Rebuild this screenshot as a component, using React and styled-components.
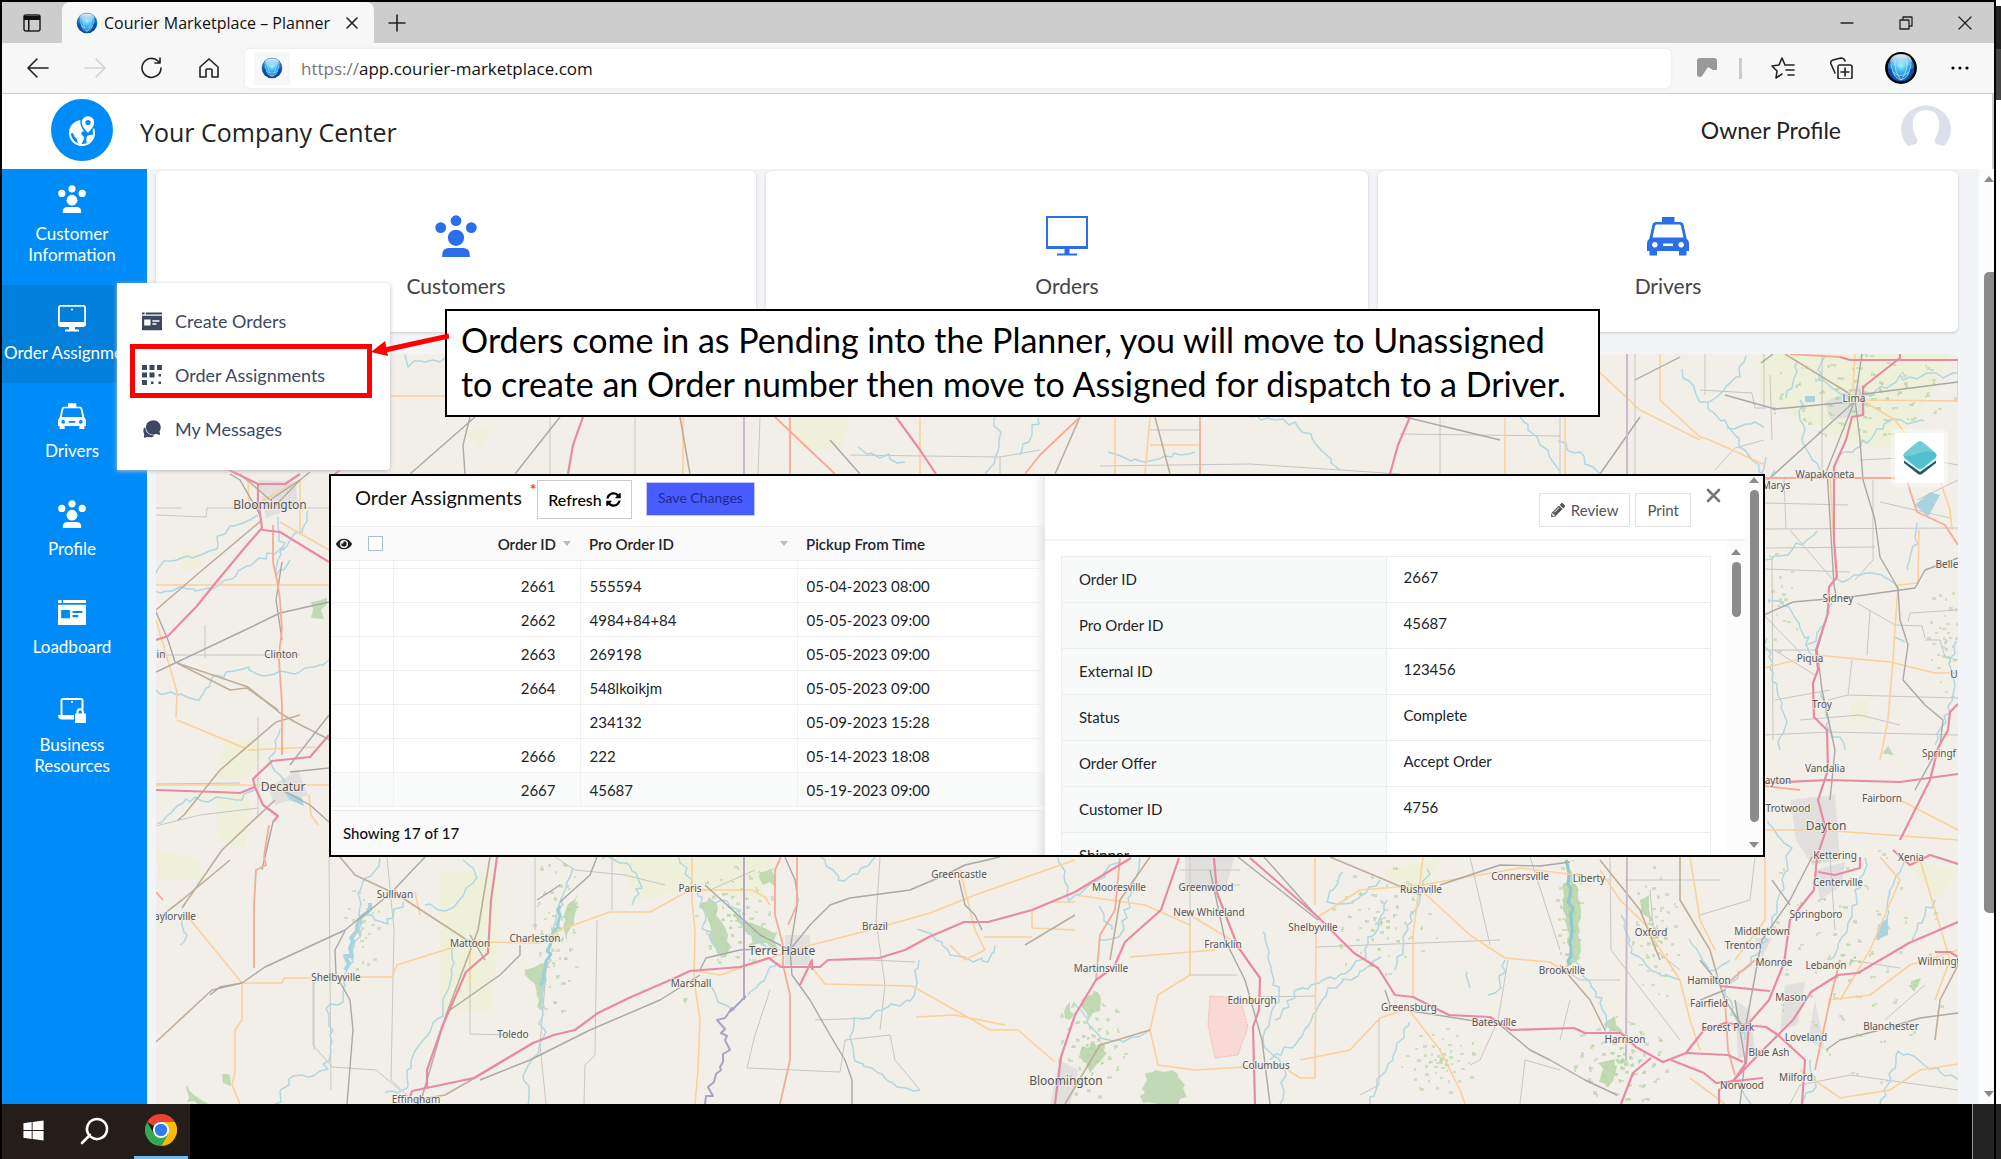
import React from 'react'
import styled, { createGlobalStyle } from 'styled-components';
import { FaEye, FaPencilAlt, FaSyncAlt, FaWindows } from 'react-icons/fa';
import { IoChatbubbles } from 'react-icons/io5';

const GlobalStyle = createGlobalStyle`
	* { box-sizing: border-box; }
	body { margin: 0; background: #fff; font-family: Lato, "Liberation Sans", sans-serif; color: #212529; }
	button, input { font: inherit; color: inherit; }
	button { border: 0; padding: 0; background: none; cursor: pointer; }
	a { color: inherit; text-decoration: none; }
	svg { display: block; flex: none; }
`;

/* ---------- icons ---------- */

const PeopleIcon = ({ size = 28 }) => (
	<svg width={size} height={size} viewBox="0 0 28 28" fill="currentColor">
		<circle cx="14" cy="3.8" r="3.6" />
		<circle cx="3.800" cy="8.4" r="3.6" />
		<circle cx="24.200" cy="8.4" r="3.6" />
		<circle cx="14" cy="15.2" r="5.4" />
		<path d="M4.800 28v-1.400q0-4.600 4.600-4.600h9.200q4.600 0 4.600 4.600V28z" />
	</svg>
);

const MonitorIcon = () => (
	<svg width="28" height="28" viewBox="0 0 28 28" fill="currentColor">
		<path fillRule="evenodd" d="M3 1h22a3 3 0 0 1 3 3v16a3 3 0 0 1-3 3H3a3 3 0 0 1-3-3V4a3 3 0 0 1 3-3zm-1.200 1.800v15.200h24.400V2.800z" />
		<path d="M11 23h6v2.400h4V27.400H7v-2h4z" />
		<circle cx="14" cy="5.600" r="1" />
	</svg>
);

const ScreenIcon = () => (
	<svg width="42" height="42" viewBox="0 0 42 42" fill="currentColor">
		<path fillRule="evenodd" d="M0 1h42v33H0zM2 3v28h38V3z" />
		<path d="M18.500 34h5v4.500H31v2H11v-2h7.500z" />
	</svg>
);

const TaxiIcon = ({ size = 28 }) => (
	<svg width={size} height={size} viewBox="0 0 42 42" fill="currentColor">
		<path fillRule="evenodd" d="M15 2h12.500v5H33q3 0 3.600 3l3 13.500q2.400 2 2.400 5V36h-2.500v4.500h-7.500V36H10v4.500H2.500V36H0v-7.500q0-3 2.400-5l3-13.500Q6 7 9 7h6zM9.500 9.500Q8.200 9.500 8 11L5.500 22.500h31L34 11q-.3-1.500-1.500-1.500zM7.800 27a2.800 2.800 0 1 0 .1 0zm26.300 0a2.800 2.800 0 1 0 .1 0zM16 28.500v2.600h10v-2.600z" />
	</svg>
);

const BoardIcon = ({ size = 27 }) => (
	<svg width={size} height={size} viewBox="0 0 27 27" fill="currentColor">
		<path d="M0 2h3.500v2.800H0zM5 2h22v2.800H5z" />
		<path fillRule="evenodd" d="M0 6.500h27V26H0zm3 5v8h8.500v-8zm11 1v2h9.500v-2zm0 4v2h5.500v-2z" />
	</svg>
);

const LaptopLockIcon = () => (
	<svg width="28" height="28" viewBox="0 0 28 28" fill="currentColor">
		<path fillRule="evenodd" d="M2.500 19V4.500q0-2.500 2.500-2.500h18q2.500 0 2.500 2.500V13h-2V4H4.500v15z" />
		<path d="M0 19h16v4.500H4Q0 23.500 0 19z" />
		<circle cx="14" cy="6" r="1" />
		<path fillRule="evenodd" d="M17 17.500h1.500V16a3.700 3.700 0 0 1 7.400 0v1.500H28V27H17zm3.500 0h3.400V16a1.700 1.700 0 0 0-3.400 0z" />
	</svg>
);

const BlocksIcon = () => (
	<svg width="20" height="20" viewBox="0 0 20 20" fill="currentColor">
		<path d="M0 0h5v5H0zM7.500 0h5v5h-5zM15 0h5v5h-5zM0 7.500h5v5H0zM7.500 7.500h5v5h-5zM0 15h5v5H0z" />
		<path d="M16.500 9h2.500v2.500h-2.500zM9 16.500h2.500V19H9zM16.500 16.500h2.500V19h-2.500z" />
	</svg>
);

const GlobeLogo = ({ size, ring }) => (
	<svg width={size} height={size} viewBox="0 0 32 32">
		<defs>
			<radialGradient id="ball" cx="50%" cy="42%" r="58%">
				<stop offset="0" stopColor="#8ff0ff" />
				<stop offset=".45" stopColor="#2fa9e6" />
				<stop offset="1" stopColor="#0a3f9c" />
			</radialGradient>
			<linearGradient id="shine" x1="0" y1="0" x2="0" y2="1">
				<stop offset="0" stopColor="#fff" stopOpacity=".9" />
				<stop offset="1" stopColor="#fff" stopOpacity="0" />
			</linearGradient>
		</defs>
		<circle cx="16" cy="16" r={ring ? 14.600 : 15} fill="url(#ball)" stroke={ring ? '#000' : 'none'} strokeWidth="2.600" />
		<path d="M3 16q-1 9 9 14-5-6-5-13zM29 16q1 9-9 14 5-6 5-13z" fill="#0b3d9a" opacity=".7" />
		<path d="M6 12Q8 26 16 28Q24 26 26 12M8 20q8 7 16 0M10 8q-1 12 6 20q7-8 6-20" fill="none" stroke="#bdeaff" strokeWidth="1" opacity=".7" />
		<ellipse cx="16" cy="9" rx="11" ry="7" fill="url(#shine)" />
	</svg>
);

const CompanyLogo = () => (
	<svg width="62" height="62" viewBox="0 0 62 62">
		<circle cx="31" cy="31" r="31" fill="#008cf8" />
		<circle cx="31" cy="34" r="12" fill="none" stroke="#fff" strokeWidth="2" />
		<path fill="#fff" d="M21 27q4-6 11-5q-3 5 1 10q-4 1-2 4q4 2 1 6l-2 4q-4-1-4-6q-3-2-4-6q-2 1-3-1z" />
		<path fill="#fff" d="M36 37q3-2 7-1q-1 6-6 9q-3-3-1-8z" />
		<path fill="#fff" stroke="#008cf8" strokeWidth="1.500" d="M37 35q-7-7-7-11.500a7 7 0 0 1 14 0q0 4.500-7 11.500z" />
		<circle cx="37" cy="23.500" r="2.600" fill="#008cf8" />
	</svg>
);

const LineIcon = ({ d, w = 22, h = 22, color = '#222', stroke = 1.600 }) => (
	<svg width={w} height={h} viewBox={`0 0 ${w} ${h}`} fill="none" stroke={color} strokeWidth={stroke} strokeLinecap="round" strokeLinejoin="round">
		<path d={d} />
	</svg>
);

const ChromeIcon = () => (
	<svg width="32" height="32" viewBox="0 0 32 32">
		<path fill="#ea4335" d="M16 16 2.140 8A16 16 0 0 1 29.860 8z" />
		<path fill="#fbbc05" d="M16 16V8h13.860A16 16 0 0 1 16 32l6.900-12z" />
		<path fill="#34a853" d="M2.140 8 9.100 20 16 23l6.900-3L16 32A16 16 0 0 1 2.140 8z" />
		<circle cx="16" cy="16" r="8" fill="#fff" />
		<circle cx="16" cy="16" r="6.200" fill="#2e7cf0" />
	</svg>
);

const LayersIcon = () => (
	<svg width="34" height="36" viewBox="0 0 34 36">
		<path fill="#1d5a6b" d="M1 20l16 11 16-11v3L19 34q-2 1.500-4 0L1 23z" />
		<path fill="#e8f7f8" d="M1 17l16 11 16-11v3.500L17 32 1 20.500z" />
		<path fill="#4fc0cc" d="M14 2.500q3-2 6 0L32.500 13q2 2.500 0 5L20 28q-3 2-6 0L1.500 18q-2-2.500 0-5z" />
		<path fill="#72cdd7" d="M14 2.500q3-2 6 0L32.500 13q-9-3-17 .5-7 3-14.800 2.500 0-2 .8-3z" />
	</svg>
);

/* ---------- map ---------- */

// breaks every long segment into short bends, for rivers and creeks
const meander = (line, amp = 4) => {
	const pts = line.split(' ').map(p => p.split(',').map(Number));
	let seed = pts[0][0] * 7 + pts[0][1];
	const rand = () => {
		seed = (seed * 9301 + 49297) % 233280;
		return seed / 233280 - 0.5;
	};
	const out = [];
	pts.slice(1).forEach(([x, y], i) => {
		const [px, py] = pts[i];
		const n = Math.max(1, Math.round(Math.hypot(x - px, y - py) / 6));
		for (let k = 0; k < n; k++) {
			out.push([px + (x - px) * k / n + rand() * amp, py + (y - py) * k / n + rand() * amp]);
		}
	});
	out.push(pts[pts.length - 1]);
	return out.map(p => p.map(Math.round).join(',')).join(' ');
};

const motorways = [
	'156,640 168,636 197,606 213,586 247,545 262,528 258,500 258,484 225,468',
	'262,530 280,532 329,562', '156,790 217,792 240,793 255,787 253,779 272,761 310,757 329,735',
	'255,787 263,805 278,816 273,822', '258,484 285,484 300,474', '340,470 330,478',
	'497,857 491,900 488,953 466,972 442,1027 427,1070 427,1087',
	'410,1097 412,1091 474,1078 533,1043 554,1035 575,1030 598,1013 631,997 675,978 690,971 740,967 769,958 781,967 820,967 828,960 879,958 905,950 929,937 964,922 988,922 1032,910 1075,892 1131,858',
	'1214,858 1217,893 1238,947 1260,978 1259,1010 1253,1027 1255,1104',
	'1250,858 1318,917 1354,953 1378,968 1395,995 1413,997 1449,1015 1490,1017 1511,1030 1574,1028 1585,1033 1621,1033 1636,1047 1663,1062 1686,1053 1728,1055 1743,1062',
	'1671,1060 1704,1073 1716,1083 1763,1078', '1651,1058 1633,1073 1621,1104',
	'1686,1053 1704,1030 1725,1023 1766,1027 1778,1035 1805,1060 1802,1104',
	'1900,354 1900,358 1863,387 1863,415 1852,417 1846,440 1834,467 1834,540 1837,577 1829,587 1828,613 1816,650 1818,670 1813,683 1814,717 1827,730 1828,770 1818,800 1826,830 1817,857 1814,890 1790,920 1784,963 1769,1000 1749,1023 1746,1063 1734,1080 1719,1090 1719,1104',
	'1958,922 1909,943 1858,973 1838,975 1811,992 1793,1020 1763,1050 1734,1080',
	'1840,357 1850,360 1958,360', '1764,783 1828,780 1900,782 1958,774',
	'1179,858 1161,910 1125,942 1114,967 1096,980 1075,1015 1061,1057 1055,1104',
	'583,417 573,445 568,474', '896,417 920,450 936,474', '1410,417 1398,445 1390,474',
	'1860,857 1860,868 1835,875 1818,872', '1893,850 1910,865 1930,855 1958,864', '1720,986 1770,991',
	'812,970 812,960 800,985', '1935,952 1950,952 1958,957', '1958,704 1950,712 1948,730 1938,748 1930,780 1900,840',
];

const trunks = [
	'273,525 273,562 278,585 280,600 282,630 280,645 279,660 282,705 282,755', '269,825 265,850 264,858 266,865 256,870 254,905 254,968',
	'156,892 163,900', '781,857 775,870 775,915 783,945 783,965 790,995 790,1060 780,1104', '797,857 797,905 788,925',
	'790,417 790,474', '775,417 835,474', '1080,417 1040,455 1025,474', '1200,417 1200,474', '1905,475 1917,512 1945,525 1958,545',
	'1765,478 1895,478', '1790,354 1840,357', '1120,858 1115,910 1100,935 1096,980', '1764,786 1800,790',
	'1725,1000 1728,1050 1735,1075', '1840,960 1830,1000 1815,1070', '1755,960 1725,985',
];

const primaries = [
	'156,585 329,585', '156,620 177,692 176,718', '248,480 249,508 300,480', '300,480 300,535', '280,522 329,550',
	'156,785 329,785', '248,750 315,747', '309,795 311,815 318,825', '177,720 247,749', '184,912 242,983 282,983 284,978 312,978 312,977 392,977 397,965 470,942 540,943 560,930 610,912 650,912 690,890 752,890 765,897 770,905',
	'242,983 242,1020 235,1030 235,1072 232,1085 240,1104', '415,892 420,915', '470,950 470,985',
	'692,857 692,900 695,930 694,980 700,1020 698,1070 695,1104', '690,970 720,975 800,948 870,930 930,913 975,895 1075,860',
	'810,965 825,984 912,986 955,1010 990,1030 1018,1030 1055,1062', '916,1017 955,1015 1005,1025', '960,870 975,930 985,950 965,960 950,945',
	'1032,910 1032,928 1075,930', '1052,902 1075,902', '984,937 1032,937', '1075,895 1145,905 1190,925 1190,975 1158,995 1150,1030 1158,1065 1195,1070 1280,1065 1300,1078 1315,1078 1316,930',
	'1130,957 1215,950', '1190,915 1235,942', '1318,917 1360,890 1421,885 1520,868 1560,873 1610,880', '1421,890 1470,935 1505,958 1550,962 1562,970',
	'1413,997 1413,935 1423,857', '1409,1010 1440,1050 1460,1090 1465,1104', '1409,1008 1380,1018 1350,1050 1300,1060',
	'1315,858 1315,905', '1651,930 1620,900 1600,870', '1651,935 1680,980 1690,1020 1700,1050', '1765,465 1710,440 1700,437',
	'1855,354 1853,390 1865,400 1958,401', '1865,402 1895,420 1910,440', '1830,475 1836,580', '1940,480 1950,510 1952,530',
	'1898,585 1918,583 1919,530', '1898,585 1893,660 1888,720 1880,760', '1764,668 1816,655 1890,662 1935,673 1958,673',
	'1764,830 1820,830 1890,835 1958,840', '1900,800 1958,830', '1920,860 1935,910 1950,960 1935,1000', '1880,857 1900,880 1870,950 1840,1000',
	'1828,1000 1870,995 1910,965 1958,950', '1800,1070 1840,1098 1890,1090 1920,1070 1958,1064', '1690,1078 1725,1104', '1690,857 1700,920 1715,950',
	'1565,417 1565,474', '1505,417 1505,474', '1115,417 1115,474', '1660,354 1660,400 1700,437', '683,417 683,474', '390,396 450,396',
	'1150,417 1145,474', '1580,354 1640,410 1700,440', '920,417 920,474', '1200,445 1150,445', '1765,857 1765,920 1735,960',
	'1958,354 1958,400', '1850,600 1851,598',
];

const railways = [
	'156,672 245,630 280,613 329,602', '282,562 276,600 282,640', '156,612 168,640 175,662', '290,765 329,715', '290,772 329,768',
	'282,790 310,805 329,822', '273,822 262,870', '242,983 265,967 345,930 390,894 425,857', '345,931 335,950 336,975 350,1000 353,1030 347,1104',
	'242,983 220,987 210,995', '485,960 470,935', '520,945 520,955 500,975 450,1010', '560,902 590,875 597,857', '537,900 560,885',
	'705,885 760,935 790,950', '785,857 795,880 798,900 790,950', '790,950 810,925 830,905 850,898 910,890 945,875 965,865 1000,857',
	'959,880 965,905 975,915 982,930', '790,950 792,975 810,1000 830,1035 845,1060 852,1080 852,1104', '700,970 706,958 740,950 775,948',
	'700,975 660,1000 590,1030 530,1060 480,1080', '1238,857 1318,920', '1210,870 1225,940 1245,980 1262,1040 1270,1104',
	'1385,990 1390,1005 1405,1010 1500,1025 1530,1050 1550,1060 1585,1080 1617,1095', '1440,885 1500,865 1540,866 1570,862',
	'1700,960 1720,985 1725,1000 1745,1030 1758,960 1762,940 1790,900 1812,857', '1772,880 1790,905', '1764,615 1793,602 1850,597 1915,588 1925,570 1958,558',
	'1725,395 1775,409 1850,402', '1862,354 1855,400 1860,440 1863,480 1875,520 1880,557 1898,588 1900,620 1908,645 1903,680 1925,705 1943,720 1940,745 1915,790',
	'1854,402 1770,478', '1855,400 1827,470 1834,585 1837,600', '1864,394 1958,382', '1761,363 1773,354', '1828,613 1817,650 1822,690 1835,750 1830,800',
	'475,417 410,474', '560,417 515,474', '1405,417 1500,440', '1640,417 1600,474', '830,440 860,474', '1740,1104 1745,1060 1735,1000',
	'1958,1013 1920,1018 1880,1030 1840,1040 1826,1050', '470,417 463,445 465,474', '1680,357 1635,380', '260,515 240,480 230,474', '270,500 300,480 310,472',
	'1264,857 1320,920', '1700,1000 1725,990',
];

const county = [
	'156,515 206,517 207,508 329,508', '205,625 205,658', '156,655 300,655', '258,717 258,815', '156,784 240,783', '156,826 200,815 258,808',
	'156,508 182,508', '314,980 314,1050', '329,857 331,1090', '387,857 394,930 391,1080 410,1098', '313,980 313,1045 332,1067 376,1070 400,1090', '470,985 470,1034 510,1035',
	'547,960 540,1045 546,1104', '535,857 535,930', '597,920 595,1055 585,1065 584,1104', '612,857 612,910', '555,857 575,870 625,875 665,885',
	'755,870 710,890 700,890', '880,857 876,920 885,985 880,1030', '770,990 755,1035 747,1068 840,1072 845,1040 890,1035 895,1060 920,1090', '815,1020 870,1018',
	'835,960 870,960 915,962', '1190,975 1237,975', '1316,947 1500,940', '1260,997 1316,996', '1470,857 1490,945', '1508,960 1498,1020 1480,1060 1470,1065',
	'1379,1020 1379,1085 1360,1095', '1530,857 1560,950', '1565,970 1580,980 1620,980', '1570,1000 1560,1040', '1610,857 1611,950 1680,1040',
	'1625,880 1720,880', '1650,890 1655,950 1680,970', '1700,390 1752,393 1755,408 1766,408', '1822,354 1822,470', '1764,503 1848,505', '1764,529 1958,528',
	'1766,548 1875,547', '1784,478 1786,529', '1790,530 1833,580', '1873,480 1873,560 1855,580', '1764,569 1850,572', '1764,650 1815,650', '1870,610 1867,655',
	'1764,440 1735,448 1715,470', '1772,556 1773,740', '1764,615 1812,665', '1857,603 1895,625 1922,626 1925,638', '1764,735 1830,732 1958,735',
	'1852,660 1848,695 1828,700', '1848,695 1958,698', '1900,455 1958,465', '1917,500 1958,480', '1860,460 1900,458', '1880,502 1950,518',
	'1908,622 1910,613 1958,610', '1925,640 1940,640 1945,657 1958,660', '1774,650 1815,675', '1775,700 1830,690', '1800,720 1860,715 1900,725',
	'1560,410 1560,474', '1440,417 1440,474', '635,417 635,474', '760,417 758,474', '1705,354 1705,395', '1635,354 1635,474', '1770,375 1772,440',
	'1755,857 1750,900 1700,915', '1200,430 1150,430', '850,455 1000,457 1040,450', '1000,457 1000,474', '1100,466 1250,464 1400,474', '1400,434 1560,436',
	'1764,354 1764,408', '550,417 550,474', '1180,870 1240,870', '1178,885 1240,885', '1190,857 1190,925', '1790,1104 1800,1085 1850,1075 1958,1090',
	'1830,857 1835,930', '1850,960 1900,968', '1885,1020 1925,985', '1520,1104 1525,1060 1560,1070',
];

const oldRoads = [
	'240,474 276,505 300,480', '156,610 200,572 262,520', '177,663 230,690 247,688 278,710', '276,722 220,770 184,815 178,820',
	'276,722 300,715', '156,920 182,900 230,860', '177,663 248,687 280,713 295,722 330,740', '275,800 222,850 182,908', '156,1042 212,990 242,983',
	'340,857 355,875 398,895 470,942', '490,857 478,930 446,1015 420,1104', '1330,857 1421,895', '1600,860 1640,910 1660,960', '1680,857 1680,900 1710,950 1720,985',
	'1080,417 1055,474', '1155,417 1170,474', '1785,354 1850,394', '1958,965 1940,1000 1935,1040', '1150,857 1120,900 1110,960', '1560,965 1590,1000 1605,1030', '415,1100 445,1095 480,1075 535,1042',
	'680,417 690,474', '1025,945 1075,915', '1065,1104 1100,1045 1150,1030',
];

const rivers = [
	'156,572 165,562 200,555 215,548 216,538 232,528 258,515', '156,592 185,588 215,590 240,570 258,560 285,548 300,530 308,510',
	'156,690 200,700 210,680 240,668 270,675 300,670 329,660', '280,730 272,760 285,790', '156,825 185,800 235,800 258,790', '278,520 283,545 275,575 290,560', '184,920 187,935 180,945',
	'380,860 360,890 362,930 350,960 340,1000 325,1010 333,1030 325,1070 290,1080 275,1104', '405,900 385,925 365,915', '465,857 475,875 465,895 450,910 425,905',
	'570,870 555,920 550,950 545,985 540,1010 545,1040 525,1070 528,1104', '455,950 452,980 438,1020 415,1050 405,1090 385,1092', '600,857 630,865 640,885 632,905',
	'680,857 690,880 700,900 705,930 720,950', '710,900 730,900 745,930 770,950', '775,960 760,985 748,995', '705,975 720,1000 735,1010', '820,857 840,880 860,875 875,857',
	'920,930 940,940 950,955 975,960 990,960 995,945', '920,960 910,1000 880,1010 855,1020 850,1050 870,1070 900,1085 920,1090', '1060,857 1070,900 1120,860', '1140,857 1130,900 1120,935 1100,940',
	'1075,1000 1095,1035 1120,1042 1150,1030', '1260,930 1270,960 1280,1000 1262,1040 1285,1070 1280,1104', '1340,870 1330,900 1350,905 1380,880', '1390,900 1360,960 1340,975 1300,990 1275,1020',
	'1380,960 1330,990 1300,1040 1270,1060', '1410,1020 1390,1060 1370,1104', '1430,870 1410,920 1395,970', '1505,960 1500,990 1488,995', '1575,960 1600,1000 1608,1035', '1465,970 1470,988',
	'1622,915 1630,950 1650,970 1680,980', '1690,940 1710,970 1730,960', '1748,354 1735,380 1708,402', '1796,360 1795,380 1786,398', '1822,358 1820,380 1850,400',
	'1958,374 1900,378 1870,395 1853,390', '1925,423 1890,420 1870,440 1840,455', '1800,398 1803,430 1806,450 1820,470', '1764,424 1727,428', '1764,460 1762,480 1775,470',
	'1817,533 1780,555 1764,560', '1838,580 1862,575 1880,573 1898,590', '1768,598 1790,610 1808,640 1812,655', '1832,600 1825,620 1815,640 1805,645', '1920,525 1912,560 1908,570',
	'1766,640 1775,680 1785,720 1780,750', '1820,690 1830,730 1845,750', '1958,640 1950,665 1956,690 1945,715 1935,745', '1895,635 1905,642', '1866,860 1850,920 1830,960', '1905,857 1885,900 1890,930',
	'1766,820 1790,850 1780,900 1760,950 1725,990 1745,1040', '860,450 880,455 905,462', '1110,455 1140,460 1195,452', '995,417 1000,445 985,474', '1040,417 1020,455', '1250,415 1300,425 1340,470', '1560,440 1600,474',
	'1680,370 1710,410 1730,430 1764,474', '403,354 410,364 445,358', '1958,1080 1900,1050 1880,1104', '1910,940 1935,900', '1100,905 1112,930', '1560,470 1530,430 1520,417', '1800,1104 1815,1085 1810,1060', '1750,1104 1740,1080',
];

const greens = [
	'1568,862 1580,905 1578,960 1568,965 1566,930 1562,900', '566,910 575,895 578,910 565,940', '525,970 545,960 548,985 540,1012 535,990', '700,900 712,900 730,945 722,960 712,940',
	'735,915 775,935 778,950 755,942', '760,870 775,868 775,885 762,883', '1145,1075 1175,1067 1187,1095 1178,1104 1142,1104', '1080,1050 1100,1042 1108,1055 1092,1070', '1082,1000 1096,990 1100,1010 1090,1020',
	'222,1074 230,1072 229,1088 223,1086', '187,1085 205,1104 190,1104', '1604,1025 1618,1015 1620,1035', '1600,1065 1615,1062 1612,1085 1602,1080', '1640,900 1650,895 1653,920 1648,925',
	'683,1000 688,996 686,1008', '1908,985 1918,978 1915,995', '312,605 325,598 322,618 314,616', '1064,1010 1072,1003 1072,1022', '1880,752 1890,745 1893,757',
];

const farmland = [
	'440,872 497,872 497,950 492,1010 440,1010', '612,857 775,857 760,900 690,890 640,900', '1760,354 1950,354 1915,420 1890,450 1845,440 1760,400', '182,552 200,552 200,570 182,570', '225,740 270,740 245,780 218,780',
	'215,780 250,800 245,850 218,840', '790,417 850,417 840,450 800,450', '1850,704 1868,700 1868,720 1852,722', '460,430 490,430 480,450', '156,850 200,860 206,880 160,880', '1380,870 1440,860 1420,900', '1900,857 1958,870 1940,900',
];

const urban = [
	'258,480 295,482 298,505 266,518', '268,788 298,770 308,795 275,805', '1825,402 1860,385 1866,415 1830,420', '1790,800 1835,795 1840,860 1812,865 1796,840', '1185,857 1235,857 1225,890 1185,890', '1735,1000 1750,1010 1755,1050 1738,1060',
	'1785,985 1805,982 1798,1025 1780,1030', '1755,938 1772,938 1762,958', '785,935 810,935 810,965 785,965', '1060,1060 1078,1070 1070,1104 1050,1104', '1815,1000 1825,1050 1808,1040', '1815,870 1845,862 1842,885 1820,900',
];

const towns = [
	['Bloomington', 270, 509, 1], ['Clinton', 281, 658], ['in', 161, 658], ['Decatur', 283, 791, 1], ['aylorville', 175, 920], ['Sullivan', 395, 898], ['Mattoon', 470, 947],
	['Charleston', 535, 942], ['Paris', 690, 892], ['Terre Haute', 782, 955, 1], ['Marshall', 691, 987], ['Shelbyville', 336, 981], ['Toledo', 513, 1038], ['Effingham', 416, 1103],
	['Brazil', 875, 930], ['Greencastle', 959, 878], ['Bloomington', 1066, 1085, 1], ['Mooresville', 1119, 891], ['Greenwood', 1206, 891], ['New Whiteland', 1209, 916],
	['Franklin', 1223, 948], ['Martinsville', 1101, 972], ['Edinburgh', 1252, 1004], ['Columbus', 1266, 1069], ['Shelbyville', 1313, 931], ['Greensburg', 1409, 1011],
	['Batesville', 1494, 1026], ['Brookville', 1562, 974], ['Rushville', 1421, 893], ['Connersville', 1520, 880], ['Liberty', 1589, 882], ['Oxford', 1651, 936],
	['Harrison', 1625, 1043], ['Hamilton', 1709, 984], ['Trenton', 1743, 949], ['Middletown', 1762, 935], ['Springboro', 1816, 918], ['Monroe', 1774, 966],
	['Lebanon', 1826, 969], ['Mason', 1791, 1001], ['Fairfield', 1709, 1007], ['Forest Park', 1728, 1031], ['Loveland', 1806, 1041], ['Blue Ash', 1769, 1056],
	['Milford', 1796, 1081], ['Norwood', 1742, 1089], ['Blanchester', 1891, 1030], ['Wilmingt', 1939, 965], ['Centerville', 1838, 886], ['Kettering', 1835, 859],
	['Xenia', 1911, 861], ['Lima', 1854, 402], ['Wapakoneta', 1825, 478], ['Marys', 1776, 489], ['Sidney', 1838, 602], ['Belle', 1947, 568], ['Piqua', 1810, 662],
	['Troy', 1822, 708], ['U', 1954, 678], ['Vandalia', 1825, 772], ['Fairborn', 1882, 802], ['ayton', 1778, 784], ['Trotwood', 1788, 812], ['Dayton', 1826, 830, 1], ['Springf', 1939, 757],
];

const Lines = ({ data, ...rest }) => data.map((p, i) => <polyline key={i} points={p} {...rest} />);
const Areas = ({ data, ...rest }) => data.map((p, i) => <polygon key={i} points={p} {...rest} />);

// small woods scattered round a few centres: [x, y, spread x, spread y, count]
const woods = [
	[1860, 395, 95, 45, 160], [1090, 1045, 35, 60, 110], [1620, 1060, 50, 45, 150], [1655, 935, 25, 70, 70], [735, 915, 45, 50, 90], [555, 930, 25, 90, 90],
	[1440, 1060, 40, 35, 60], [1380, 920, 60, 60, 80], [1850, 960, 100, 130, 120], [1945, 640, 20, 60, 40], [1780, 600, 20, 60, 20], [1568, 910, 14, 55, 60], [360, 930, 20, 50, 30],
].flatMap(([cx, cy, rx, ry, count], w) => Array.from({ length: count }, (_, i) => {
	const angle = i * 2.4 + w;
	const far = ((i * 617 + w * 31) % 101) / 101;
	return [Math.round(cx + Math.cos(angle) * rx * far), Math.round(cy + Math.sin(angle) * ry * far)];
}));

const RoadMap = () => (
	<MapSvg viewBox="156 354 1802 750" preserveAspectRatio="xMidYMid slice" role="img" aria-label="Map of order locations">
		<rect x="156" y="354" width="1802" height="750" fill="#f2efe9" />
		<Areas data={farmland} fill="#eef0d5" opacity=".8" />
		<Areas data={urban} fill="#dadada" opacity=".7" />
		<Areas data={greens.map(g => meander(g + ' ' + g.split(' ')[0], 6))} fill="#add19e" opacity=".7" />
		{woods.map(([x, y], i) => <rect key={i} x={x} y={y} width={2 + i % 3} height={2 + i % 2} fill="#b5d6a4" opacity=".6" />)}
		<polygon points="1210,996 1240,998 1248,1027 1238,1055 1215,1058 1208,1025" fill="#f9d9d3" stroke="#f4bcb6" strokeDasharray="2 1" />
		<polygon points="1915,505 1930,492 1940,495 1928,517" fill="#aad3df" />
		<polygon points="1805,396 1815,396 1815,402 1805,402" fill="#aad3df" />
		<polygon points="1878,925 1888,918 1888,935 1876,940" fill="#aad3df" />
		<polygon points="283,790 302,798 304,806 290,800" fill="#aad3df" />
		<g fill="none" strokeLinejoin="round">
			<Lines data={county} stroke="#c6c6c6" strokeWidth="1" />
			<Lines data={rivers.map(r => meander(r, 6))} stroke="#b0d7e3" strokeWidth="1.500" />
			<polyline points={meander('1568,860 1572,920 1570,965', 5)} stroke="#8fc9cf" strokeWidth="3" />
			<polyline points={meander('562,905 550,950 540,985', 6)} stroke="#9ccfd8" strokeWidth="3" />
			<polyline points={meander('370,905 355,930 345,970', 6)} stroke="#aad3df" strokeWidth="4" />
			<Lines data={primaries} stroke="#fbd19b" strokeWidth="1.600" />
			<Lines data={oldRoads} stroke="#bfae97" strokeWidth="1.600" />
			<Lines data={railways} stroke="#a8a8a8" strokeWidth="1.400" />
			<polyline points="744,857 744,1000" stroke="#b9a8c4" strokeWidth="2" />
			<polyline points={meander('744,1000 720,1020 728,1050 705,1104', 8)} stroke="#aba3c6" strokeWidth="2" />
			<polyline points="1627,354 1627,474" stroke="#cdb9cd" strokeWidth="2" />
			<polyline points="1627,857 1626,1060" stroke="#cdb9cd" strokeWidth="2" />
			<polyline points="744,417 744,474" stroke="#cdb9cd" strokeWidth="2" />
			<Lines data={trunks} stroke="#f7ab94" strokeWidth="1.800" />
			<Lines data={motorways} stroke="#e88aa2" strokeWidth="2.200" />
		</g>
		<TownLabels>
			{towns.map(([name, x, y, big], i) => <text key={i} x={x} y={y} fontSize={big ? 12 : 10}>{name}</text>)}
		</TownLabels>
	</MapSvg>
);

/* ---------- data ---------- */

const cards = [
	{ label: 'Customers', icon: <PeopleIcon size={42} /> },
	{ label: 'Orders', icon: <ScreenIcon /> },
	{ label: 'Drivers', icon: <TaxiIcon size={42} /> },
];

const orders = [
	['2661', '555594', '05-04-2023 08:00'],
	['2662', '4984+84+84', '05-05-2023 09:00'],
	['2663', '269198', '05-05-2023 09:00'],
	['2664', '548lkoikjm', '05-05-2023 09:00'],
	['', '234132', '05-09-2023 15:28'],
	['2666', '222', '05-14-2023 18:08'],
	['2667', '45687', '05-19-2023 09:00'],
];

const details = [
	['Order ID', '2667'],
	['Pro Order ID', '45687'],
	['External ID', '123456'],
	['Status', 'Complete'],
	['Order Offer', 'Accept Order'],
	['Customer ID', '4756'],
	['Shipper', ''],
];

export default function App() {
	return (
		<>
			<GlobalStyle />
			<Desktop>
				<Window>
					<BrowserChrome />
					<AppHeader />
					<Main>
						<Sidebar />
						<Content>
							<Cards>
								{cards.map(card => <Card key={card.label} href="#">{card.icon}{card.label}</Card>)}
							</Cards>
							<MapBox>
								<RoadMap />
								<LayerButton aria-label="Map layers"><LayersIcon /></LayerButton>
							</MapBox>
						</Content>
						<PageScroll>
							<Arrow />
							<PageThumb />
							<Arrow down />
						</PageScroll>
						<OrderPanel />
						<Callout>
							<Pointer width="78" height="36" viewBox="0 0 78 36">
								<path d="M78 8 14 22" stroke="#f00" strokeWidth="5" />
								<path d="M0 24 14 13 17 28z" fill="#f00" />
							</Pointer>
							Orders come in as Pending into the Planner, you will move to Unassigned<br />
							to create an Order number then move to Assigned for dispatch to a Driver.
						</Callout>
					</Main>
					<Taskbar />
				</Window>
				<Edge />
			</Desktop>
		</>
	)
}

const BrowserChrome = () => (
	<>
		<TabBar>
			<TabMenu aria-label="Tab actions">
				<svg width="18" height="18" viewBox="0 0 18 18"><rect x="1" y="1" width="16" height="16" rx="2" fill="none" stroke="#222" strokeWidth="1.500" /><path d="M1 2h16v4H1zM5 6h1.500v11H5z" fill="#111" /></svg>
			</TabMenu>
			<Tab>
				<GlobeLogo size={22} />
				<TabTitle>Courier Marketplace – Planner</TabTitle>
				<button aria-label="Close tab"><LineIcon w={12} h={12} d="M1 1l10 10M11 1L1 11" /></button>
			</Tab>
			<NewTab aria-label="New tab"><LineIcon w={18} h={18} d="M9 1v16M1 9h16" /></NewTab>
			<WindowButtons>
				<button aria-label="Minimize"><LineIcon w={14} h={14} stroke={1.300} d="M1 7h12" /></button>
				<button aria-label="Restore"><LineIcon w={14} h={14} stroke={1.300} d="M1 4h9v9H1zM4 3V1h9v9h-2" /></button>
				<button aria-label="Close"><LineIcon w={14} h={14} stroke={1.300} d="M1 1l12 12M13 1L1 13" /></button>
			</WindowButtons>
		</TabBar>
		<Toolbar>
			<NavButtons>
				<button aria-label="Back"><LineIcon d="M10 2L1 11l9 9M1 11h20" /></button>
				<button aria-label="Forward"><LineIcon color="#d4d4d4" d="M12 2l9 9-9 9M21 11H1" /></button>
				<button aria-label="Reload"><LineIcon d="M20 11a9.500 9.500 0 1 1-3-7l2 2M19 1v5h-5" /></button>
				<button aria-label="Home"><LineIcon d="M2 10l9-8 9 8v10h-6v-7q0-1-1-1h-4q-1 0-1 1v7H2z" /></button>
			</NavButtons>
			<AddressBar>
				<SiteIcon><GlobeLogo size={22} /></SiteIcon>
				<Scheme htmlFor="address">https://</Scheme>
				<Address id="address" defaultValue="app.courier-marketplace.com" />
			</AddressBar>
			<Tools>
				<svg width="20" height="20" viewBox="0 0 20 20"><path fill="#999" d="M3 0h14q3 0 3 3v9h-4l-5-3-6 9-2 1q-3 0-3-3V3q0-3 3-3z" /></svg>
				<Divider />
				<ToolButton aria-label="Favorites"><LineIcon w={24} d="M14 8l-3-7-3 7-7 1 5 5-1 7 6-4M15 8h8M15 13h8M17 18h6" /></ToolButton>
				<ToolButton aria-label="Collections"><LineIcon w={24} d="M9 8h11q2 0 2 2v10q0 2-2 2H10q-2 0-2-2V9M15 11v8M11 15h8M5 16l-4-9q-1-3 2-4l8-2q3 0 4 3" /></ToolButton>
				<ToolButton aria-label="Account"><GlobeLogo size={32} ring /></ToolButton>
				<ToolButton aria-label="More">
					<svg width="18" height="4" viewBox="0 0 18 4"><circle cx="2" cy="2" r="1.600" /><circle cx="9" cy="2" r="1.600" /><circle cx="16" cy="2" r="1.600" /></svg>
				</ToolButton>
			</Tools>
		</Toolbar>
	</>
);

const AppHeader = () => (
	<Header>
		<CompanyLogo />
		<Company>Your Company Center</Company>
		<Owner href="#">Owner Profile</Owner>
		<Avatar width="50" height="42" viewBox="0 0 50 42">
			<path fill="#dce0ea" d="M7 41a25 24 0 1 1 36 0l-8-2q-3-3 0-7 4-6 3-16Q36 5 25 5T12 16q-1 10 3 16 3 4 0 7z" />
		</Avatar>
	</Header>
);

const Sidebar = () => (
	<Side>
		<SideItem first><SideLink href="#"><PeopleIcon />Customer<br />Information</SideLink></SideItem>
		<SideItem active>
			<SideLink href="#"><MonitorIcon />Order Assignments</SideLink>
			<Flyout>
				<FlyoutLink href="#"><BoardIcon size={20} />Create Orders</FlyoutLink>
				<FlyoutLink href="#" marked><BlocksIcon />Order Assignments</FlyoutLink>
				<FlyoutLink href="#"><IoChatbubbles size={20} />My Messages</FlyoutLink>
			</Flyout>
		</SideItem>
		<SideItem><SideLink href="#"><TaxiIcon />Drivers</SideLink></SideItem>
		<SideItem><SideLink href="#"><PeopleIcon />Profile</SideLink></SideItem>
		<SideItem><SideLink href="#"><BoardIcon size={28} />Loadboard</SideLink></SideItem>
		<SideItem><SideLink href="#"><LaptopLockIcon />Business<br />Resources</SideLink></SideItem>
	</Side>
);

const OrderPanel = () => (
	<Panel>
		<OrderList>
			<ListBar>
				<ListTitle>Order Assignments</ListTitle>
				<Star>*</Star>
				<RefreshButton>Refresh <FaSyncAlt size={15} /></RefreshButton>
				<SaveButton>Save Changes</SaveButton>
			</ListBar>
			<Orders>
				<colgroup><col width="28" /><col width="34" /><col width="187" /><col width="217" /><col /></colgroup>
				<thead>
					<tr>
						<th><FaEye size={16} /></th>
						<th><Tick type="checkbox" aria-label="Select all orders" /></th>
						<Num as="th"><Sort>Order ID <Caret /></Sort></Num>
						<th><Sort wide>Pro Order ID <Caret /></Sort></th>
						<th>Pickup From Time</th>
					</tr>
				</thead>
				<tbody>
					<Stub><td /><td /><td /><td /><td /></Stub>
					{orders.map(([id, pro, time]) => (
						<OrderRow key={pro} selected={id === '2667'}>
							<td /><td /><Num>{id}</Num><td>{pro}</td><td>{time}</td>
						</OrderRow>
					))}
				</tbody>
			</Orders>
			<ListFoot>Showing 17 of 17</ListFoot>
		</OrderList>
		<OrderDetail>
			<DetailBar>
				<DetailButton><FaPencilAlt size={14} />Review</DetailButton>
				<DetailButton>Print</DetailButton>
				<CloseButton aria-label="Close details"><LineIcon w={15} h={15} color="#777" stroke={2.600} d="M2 2l11 11M13 2L2 13" /></CloseButton>
			</DetailBar>
			<DetailBody>
				<Details>
					<tbody>
						{details.map(([name, value]) => <tr key={name}><th scope="row">{name}</th><td>{value}</td></tr>)}
					</tbody>
				</Details>
				<Scroll top={8}><Arrow /><Thumb length={55} /></Scroll>
			</DetailBody>
		</OrderDetail>
		<Scroll top={1}><Arrow /><Thumb length={332} /><Arrow down /></Scroll>
	</Panel>
);

const Taskbar = () => (
	<Tasks>
		<TaskGroup>
			<TaskButton aria-label="Start"><FaWindows size={23} /></TaskButton>
			<TaskButton aria-label="Search"><LineIcon w={30} h={30} color="#fff" stroke={2.600} d="M9 20a10 10 0 1 1 2 2M10 20l-8 8" /></TaskButton>
			<TaskButton aria-label="Chrome" running><ChromeIcon /></TaskButton>
		</TaskGroup>
		<ShowDesktop aria-label="Show desktop" />
	</Tasks>
);

/* ---------- styles ---------- */

const uiFont = '"Open Sans", "Noto Sans", sans-serif';

const Desktop = styled.div`
	display: flex;
	min-height: 100vh;
`;
const Window = styled.div`
	flex: 1;
	min-width: 0;
	display: flex;
	flex-direction: column;
	border: 2px solid #000;
	border-bottom: 0;
`;
const Edge = styled.div`
	width: 5px;
	background: linear-gradient(#fff 6px, #222 6px 49px, #444 49px 100px, #fff 100px 1104px, #222 1104px);
`;
const TabBar = styled.div`
	display: flex;
	align-items: center;
	height: 41px;
	background: #cdcdcd;
	color: #111;
`;
const TabMenu = styled.button`
	width: 60px;
	display: flex;
	justify-content: center;
`;
const Tab = styled.div`
	display: flex;
	align-items: center;
	align-self: stretch;
	gap: 6px;
	width: 312px;
	padding: 0 16px 0 14px;
	border-radius: 8px 8px 0 0;
	background: #f7f7f7;
	white-space: nowrap;
`;
const TabTitle = styled.span`
	flex: 1;
	font: 16px ${uiFont};
`;
const NewTab = styled.button`
	margin-left: 14px;
`;
const WindowButtons = styled.div`
	display: flex;
	gap: 45px;
	margin-left: auto;
	padding-right: 22px;
`;
const Toolbar = styled.div`
	display: flex;
	align-items: center;
	height: 51px;
	background: #f7f7f7;
	border-bottom: 1px solid #ccc;
`;
const NavButtons = styled.div`
	display: flex;
	gap: 35px;
	padding: 0 25px 0 25px;
`;
const AddressBar = styled.div`
	flex: 1;
	display: flex;
	align-items: center;
	height: 39px;
	padding-left: 9px;
	border-radius: 5px;
	background: #fff;
	box-shadow: 0 0 3px #e2e2e2;
	font: 17px ${uiFont};
`;
const SiteIcon = styled.span`
	display: flex;
	justify-content: center;
	align-items: center;
	width: 36px;
	height: 33px;
	margin-right: 11px;
	background: #f7f7f7;
`;
const Scheme = styled.label`
	color: #777;
`;
const Address = styled.input`
	flex: 1;
	border: 0;
	padding: 0;
	outline: 0;
	color: #111;
`;
const Tools = styled.div`
	display: flex;
	align-items: center;
	padding: 0 16px 0 26px;
	gap: 22px;
`;
const Divider = styled.span`
	width: 3px;
	height: 21px;
	background: #ccc;
`;
const ToolButton = styled.button`
	display: flex;
	justify-content: center;
	width: 37px;
`;
const Header = styled.header`
	display: flex;
	align-items: center;
	height: 75px;
	padding: 0 41px 3px 49px;
	border-right: 2px solid #ccc;
	background: #fff;
`;
const Company = styled.h1`
	flex: 1;
	margin: 0 0 0 27px;
	padding-top: 4px;
	font: 25px ${uiFont};
	color: #222;
`;
const Owner = styled.a`
	margin-right: 60px;
	font-size: 23px;
	color: #222;
`;
const Avatar = styled.svg`
	align-self: flex-start;
	margin-top: 11px;
`;
const Main = styled.main`
	flex: 1;
	display: flex;
	position: relative;
	min-height: 700px;
`;
const Side = styled.nav`
	width: 145px;
	background: #008cf8;
	color: #fff;
`;
const SideItem = styled.div`
	position: relative;
	padding: ${props => props.first ? 16 : 19}px 0 20px;
	background: ${props => props.active ? '#007fdb' : 'none'};
`;
const SideLink = styled.a`
	display: block;
	padding: 0 7px 0 2px;
	text-align: center;
	white-space: nowrap;
	font-size: 17px;
	line-height: 21px;
	svg { margin: 0 auto 10px; }
`;
const Flyout = styled.div`
	position: absolute;
	z-index: 3;
	top: -2px;
	left: 115px;
	width: 273px;
	padding: 7px 18px 18px 13px;
	border-radius: 0 4px 4px 0;
	background: #fff;
	box-shadow: 0 1px 4px #bbb;
`;
const FlyoutLink = styled.a`
	display: flex;
	align-items: center;
	gap: 13px;
	height: 54px;
	padding: 7px 0 0 7px;
	border: 5px solid ${props => props.marked ? '#f00' : 'transparent'};
	font-size: 18px;
	color: #3e4863;
	white-space: nowrap;
`;
const Content = styled.div`
	flex: 1;
	display: flex;
	flex-direction: column;
	min-width: 0;
	padding: 2px 21px 0 9px;
	background: #f2f4f7;
`;
const Cards = styled.div`
	display: grid;
	grid-template-columns: 600fr 602fr 580fr;
	gap: 10px;
	margin-bottom: 22px;
`;
const Card = styled.a`
	display: flex;
	flex-direction: column;
	align-items: center;
	gap: 13px;
	padding: 44px 0 31px;
	border-radius: 6px;
	background: #fff;
	box-shadow: 0 1px 3px #c8cacd;
	font-size: 21px;
	line-height: 31px;
	color: #444;
	svg { color: #2a6fea; }
`;
const MapBox = styled.div`
	flex: 1;
	position: relative;
	overflow: hidden;
	border-radius: 6px 6px 0 0;
`;
const MapSvg = styled.svg`
	position: absolute;
	inset: 0;
	width: 100%;
	height: 100%;
`;
const TownLabels = styled.g`
	font-family: "Noto Sans", sans-serif;
	text-anchor: middle;
	fill: #555;
	stroke: #f6f3ee;
	stroke-width: 2px;
	stroke-opacity: 0.7;
	paint-order: stroke;
`;
const LayerButton = styled.button`
	position: absolute;
	top: 79px;
	right: 14px;
	display: flex;
	align-items: center;
	justify-content: center;
	width: 49px;
	height: 50px;
	border-radius: 3px;
	background: #fff;
	box-shadow: 0 0 0 4px rgba(255, 255, 255, 0.4);
`;
const PageScroll = styled.div`
	display: flex;
	flex-direction: column;
	align-items: flex-end;
	width: 15px;
	padding: 7px 0;
	background: #fcfcfc;
	overflow: hidden;
`;
const PageThumb = styled.div`
	width: 10px;
	height: 641px;
	margin: 90px 0 auto;
	border-radius: 5px 0 0 5px;
	background: #8b8b8b;
`;
const Arrow = styled.span`
	flex: none;
	border: 5px solid transparent;
	border-top: ${props => props.down ? '6px solid #8b8b8b' : '0'};
	border-bottom: ${props => props.down ? '0' : '6px solid #8b8b8b'};
	margin-top: ${props => props.down ? 'auto' : '0'};
`;
const Callout = styled.div`
	position: absolute;
	z-index: 4;
	top: 140px;
	left: 443px;
	min-width: 1155px;
	padding: 7px 14px 9px;
	border: 2px solid #000;
	background: #fff;
	font-size: 34px;
	line-height: 44px;
	color: #000;
	white-space: nowrap;
`;
const Pointer = styled.svg`
	position: absolute;
	left: -76px;
	top: 17px;
`;
const Panel = styled.section`
	position: absolute;
	z-index: 2;
	top: 305px;
	left: 327px;
	right: 229px;
	height: 383px;
	display: grid;
	grid-template-columns: 714px 1fr 18px;
	border: 2px solid #000;
	background: #fff;
	font-size: 15px;
	overflow: hidden;
`;
const OrderList = styled.div`
	display: flex;
	flex-direction: column;
	min-width: 0;
	box-shadow: inset -12px 0 12px -10px #ddd;
`;
const ListBar = styled.div`
	display: flex;
	align-items: flex-start;
	height: 50px;
	padding: 4px 0 0 24px;
`;
const ListTitle = styled.h2`
	width: 175px;
	margin: 0;
	font-size: 20px;
	font-weight: 400;
	line-height: 34px;
	color: #111;
`;
const Star = styled.span`
	width: 7px;
	font-weight: 700;
	color: #f33;
`;
const RefreshButton = styled.button`
	display: flex;
	align-items: center;
	justify-content: center;
	gap: 4px;
	width: 95px;
	height: 39px;
	border: 1px solid #ccc;
	font-size: 16px;
	font-weight: 500;
	color: #000;
`;
const SaveButton = styled.button`
	width: 109px;
	height: 34px;
	margin: 2px 0 0 14px;
	padding-bottom: 4px;
	border: 1px solid #c3c8f8;
	background: #485cff;
	color: #23298c;
	font-size: 14px;
`;
const Orders = styled.table`
	width: 100%;
	table-layout: fixed;
	border-collapse: collapse;
	th {
		height: 34px;
		padding: 0 9px;
		border: solid #eee;
		border-width: 1px 0;
		background: rgba(0, 0, 0, 0.02);
		text-align: left;
		font-weight: 600;
		white-space: nowrap;
	}
	th:nth-child(-n+2) { padding: 0 5px; }
	td {
		padding: 0 9px;
		border: 1px solid #f0f0f0;
		border-width: 0 1px 1px 0;
	}
	td:last-child { border-right: 0; }
`;
const Stub = styled.tr`
	height: 8px;
`;
const OrderRow = styled.tr`
	height: 34px;
	background: ${props => props.selected ? 'rgba(0, 60, 40, 0.025)' : 'none'};
`;
const Num = styled.td`
	&& {
		padding-right: 24px;
		text-align: right;
	}
`;
const Sort = styled.span`
	display: flex;
	align-items: center;
	justify-content: ${props => props.wide ? 'space-between' : 'flex-end'};
	gap: 7px;
	margin-right: ${props => props.wide ? 0 : -15}px;
`;
const Caret = styled.i`
	border: 4px solid transparent;
	border-top: 5px solid #bbb;
	border-bottom: 0;
`;
const Tick = styled.input`
	display: block;
	appearance: none;
	width: 15px;
	height: 15px;
	margin: 0 0 0 4px;
	border: 1px solid #a9bfd0;
	background: #fff;
`;
const ListFoot = styled.div`
	flex: 1;
	display: flex;
	align-items: center;
	margin-top: 3px;
	padding-left: 12px;
	border-top: 1px solid #e6e8f0;
	background: rgba(0, 0, 0, 0.02);
	font-weight: 500;
	color: #111;
`;
const OrderDetail = styled.div`
	display: flex;
	flex-direction: column;
	min-height: 0;
	min-width: 0;
`;
const DetailBar = styled.div`
	display: flex;
	justify-content: flex-end;
	gap: 5px;
	height: 65px;
	padding: 17px 24px 0 0;
	border-bottom: 2px solid #f3f3f3;
`;
const DetailButton = styled.button`
	display: flex;
	align-items: center;
	gap: 6px;
	height: 34px;
	padding: 0 11px;
	border: 1px solid #e3e3e3;
	color: #555;
`;
const CloseButton = styled.button`
	align-self: flex-start;
	margin: -5px 0 0 10px;
`;
const DetailBody = styled.div`
	flex: 1;
	display: flex;
	min-height: 0;
	padding-left: 16px;
	overflow: hidden;
`;
const Details = styled.table`
	flex: 1;
	align-self: flex-start;
	margin: 15px 16px 0 0;
	table-layout: fixed;
	border-collapse: collapse;
	th, td {
		width: 50%;
		height: 46px;
		padding: 0 17px 2px;
		border: 1px solid #ebeeee;
		text-align: left;
		font-weight: 400;
	}
	th { background: #f8faf9; }
	td { padding-bottom: 5px; }
`;
const Scroll = styled.div`
	display: flex;
	flex-direction: column;
	align-items: center;
	gap: 7px;
	width: 18px;
	padding: ${props => props.top}px 0 7px;
	background: #fcfcfc;
`;
const Thumb = styled.div`
	width: 9px;
	height: ${props => props.length}px;
	border-radius: 5px;
	background: #8b8b8b;
`;
const Tasks = styled.footer`
	display: flex;
	justify-content: space-between;
	height: 55px;
	background: #000;
`;
const TaskGroup = styled.div`
	display: flex;
	padding-right: 2px;
	background: #241d19;
`;
const TaskButton = styled.button`
	display: flex;
	align-items: center;
	justify-content: center;
	width: ${props => props.running ? 54 : 62}px;
	margin-left: ${props => props.running ? 8 : 0}px;
	border-bottom: 3px solid ${props => props.running ? '#76b9ed' : 'transparent'};
	color: #fff;
`;
const ShowDesktop = styled.button`
	width: 22px;
	background: #222;
	border-left: 1px solid #999;
`;
